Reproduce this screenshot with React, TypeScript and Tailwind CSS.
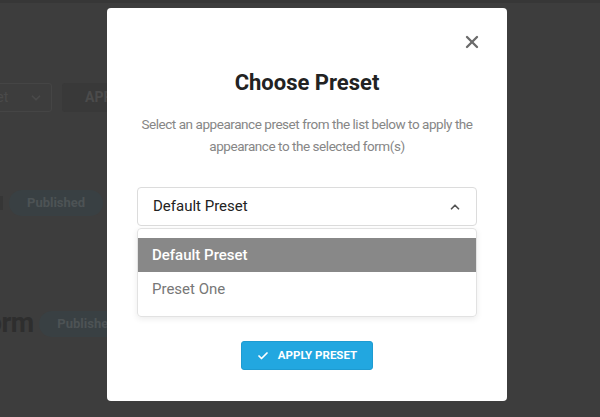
import { Check, ChevronDown, ChevronUp, X } from "lucide-react";

const options = ["Default Preset", "Preset One"];

export default function App() {
  const selected = "Default Preset";

  return (
    <div
      className="relative w-[600px] h-[417px] overflow-hidden bg-[#3d3d3d]"
      style={{ fontFamily: "Roboto, 'Liberation Sans', sans-serif" }}
    >
      {/* Page behind the overlay */}
      <div className="flex flex-col">
        <div className="h-[3px] bg-[#373737]" />
        <div className="flex items-center gap-[10px] mt-[80px] -ml-[20px]">
          <div className="flex items-center justify-between w-[72px] h-[29px] pl-[8px] pr-[8px] border border-[#454545] rounded-[3px]">
            <span className="text-[14px] text-[#4a4a4a]">set</span>
            <ChevronDown className="w-[14px] h-[14px] text-[#4a4a4a]" strokeWidth={3} />
          </div>
          <div className="flex items-center w-[60px] h-[29px] pl-[23px] rounded-[3px] bg-[#393939] text-[14px] font-bold text-[#4b4b4b]">
            APPLY
          </div>
        </div>
        <div className="flex items-center gap-[6px] mt-[78px] -ml-[2px]">
          <span className="w-[5px] h-[14px] bg-[#363636]" />
          <span className="flex items-center h-[26px] px-[18px] rounded-full bg-[#394043] text-[13px] font-bold text-[#4d5355]">
            Published
          </span>
        </div>
        <div className="flex items-center gap-[6px] mt-[94px] -ml-[27px]">
          <span className="text-[27px] font-bold leading-none tracking-tight text-[#2e2e2e]">Form</span>
          <span className="flex items-center h-[26px] px-[18px] rounded-full bg-[#394043] text-[13px] font-bold text-[#4d5355]">
            Published
          </span>
        </div>
      </div>

      {/* Modal */}
      <div className="absolute left-[107px] top-[8px] w-[400px] h-[393px] rounded-[4px] bg-white flex flex-col items-center">
        <button className="absolute right-[25px] top-[24px] text-[#6b6b6b]">
          <X className="w-[20px] h-[20px]" strokeWidth={2.8} />
        </button>
        <h2 className="mt-[60px] text-[22px] font-bold leading-[30px] text-[#222]">Choose Preset</h2>
        <p className="mt-[15px] w-[352px] text-center text-[13.5px] tracking-[-0.45px] leading-[22px] text-[#868686]">
          Select an appearance preset from the list below to apply the appearance to the selected form(s)
        </p>

        <div className="mt-[30px] w-[340px] flex flex-col">
          <div className="flex items-center justify-between h-[39px] pl-[15px] pr-[14px] border border-[#dcdcdc] rounded-[4px]">
            <span className="text-[15px] text-[#222]">{selected}</span>
            <ChevronUp className="w-[14px] h-[14px] text-[#555]" strokeWidth={3} />
          </div>
          <ul className="mt-[2px] pt-[9px] pb-[10px] border border-[#e2e2e2] rounded-[4px] shadow-[0_2px_6px_rgba(0,0,0,0.08)]">
            {options.map((o) =>
              o === selected ? (
                <li
                  key={o}
                  className="flex items-center h-[34px] pl-[14px] bg-[#888888] text-[15px] font-medium text-white"
                >
                  {o}
                </li>
              ) : (
                <li key={o} className="flex items-center h-[34px] pl-[14px] text-[15px] text-[#777]">
                  {o}
                </li>
              )
            )}
          </ul>
        </div>

        <button className="mt-[24px] flex items-center gap-[9px] h-[29px] pl-[15px] pr-[15px] rounded-[3px] bg-[#22a7e0] border border-[#1e9bd1] text-[11.5px] font-bold text-white">
          <Check className="w-[12px] h-[12px]" strokeWidth={3.5} />
          APPLY PRESET
        </button>
      </div>
    </div>
  );
}
